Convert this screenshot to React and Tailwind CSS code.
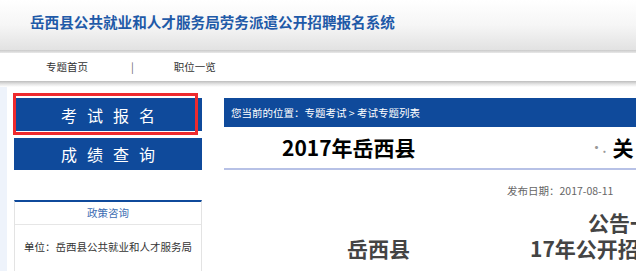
import React from 'react';

const FONT = { fontFamily: '"Microsoft YaHei", "Noto Sans CJK SC", "Noto Sans", sans-serif' };

const SideButton = ({ label, className }) => (
  <div className={`flex items-center justify-center bg-[#0f4a9b] text-white text-[16px] tracking-[10px] pl-[10px] ${className}`}>
    {label}
  </div>
);

const App = () => {
  return (
    <div style={FONT} className="relative w-[636px] h-[271px] overflow-hidden bg-white">
      {/* header */}
      <div className="h-[50px] bg-gradient-to-b from-white via-[#f6f6f6] to-[#e2e2e2] flex items-center pl-[30px] pb-[5px]">
        <h1 className="text-[14.6px] font-bold text-[#1f5aa8] leading-none">
          岳西县公共就业和人才服务局劳务派遣公开招聘报名系统
        </h1>
      </div>
      <div className="h-[3px] bg-gradient-to-b from-[#c9c9c9] to-[#e9e9e9]" />

      {/* nav */}
      <div className="h-[28px] flex items-center text-[10.5px] text-[#333]">
        <span className="ml-[46px]">专题首页</span>
        <span className="ml-[43px] text-[#666]">|</span>
        <span className="ml-[40px]">职位一览</span>
      </div>
      <div className="h-[6px] bg-gradient-to-b from-[#bdbdbd] via-[#e4e4e4] to-white" />

      {/* body */}
      <div className="flex h-[200px]">
        <div className="w-[7px] shrink-0 bg-[#eef3fb]" />
        <div className="w-[188px] shrink-0 ml-[7px] pt-[11px] flex flex-col">
          <SideButton label="考试报名" className="h-[33px]" />
          <SideButton label="成绩查询" className="h-[32px] mt-[7px]" />
          <div className="mt-[30px] border-t-2 border-[#0f4a9b] border-x border-x-[#e3e3e3] flex-1">
            <div className="h-[23px] flex items-center justify-center text-[10.5px] text-[#3d6db3] border-b border-[#e6e6e6]">
              政策咨询
            </div>
            <div className="pl-[9px] pt-[14px] text-[10.5px] text-[#333] whitespace-nowrap">
              单位：岳西县公共就业和人才服务局
            </div>
          </div>
        </div>

        <div className="flex-1 min-w-0 ml-[22px] pt-[11px] flex flex-col overflow-hidden">
          <div className="h-[29px] bg-[#0f4a9b] flex items-center pl-[7px] text-[10.5px] text-white whitespace-nowrap">
            您当前的位置：专题考试 &gt; 考试专题列表
          </div>
          <div className="h-[43px] flex items-center border-b-2 border-[#b7c1e6] pl-[58px] text-[21px] font-bold text-black whitespace-nowrap">
            <span>2017年岳西县</span>
            <span className="ml-[175px] text-[#999] text-[12px]">·.</span>
            <span className="ml-[6px]">关</span>
          </div>
          <div className="pl-[283px] pt-[16px] text-[10.5px] text-[#666] leading-none whitespace-nowrap">
            发布日期：2017-08-11
          </div>
          <div className="pl-[364px] pt-[12px] text-[21px] font-bold text-[#444] leading-[26px] whitespace-nowrap">
            公告一
          </div>
          <div className="flex pl-[123px] text-[21px] font-bold text-[#444] leading-[26px] whitespace-nowrap">
            <span>岳西县</span>
            <span className="ml-[120px]">17年公开招</span>
          </div>
        </div>
      </div>

      {/* red highlight marker over the first button */}
      <div className="absolute left-[13px] top-[93px] w-[185px] h-[42px] border-[3px] border-[#ee2a2e]" />
    </div>
  );
};

export default App;
